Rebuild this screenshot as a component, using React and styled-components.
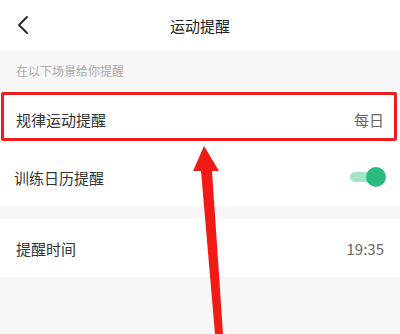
import React from 'react';
import styled, { createGlobalStyle } from 'styled-components';

const GlobalStyle = createGlobalStyle`
  body {
    margin: 0;
    background: #f7f7f7;
    font-family: 'Noto Sans CJK SC', 'Noto Sans', sans-serif;
  }
`;

const Page = styled.div`
  position: relative;
  width: 400px;
  height: 334px;
  overflow: hidden;
  background: #f7f7f7;
`;

const Header = styled.div`
  height: 50px;
  background: #fff;
  display: flex;
  align-items: center;
  justify-content: center;
  position: relative;
`;

const Back = styled.div`
  position: absolute;
  left: 16px;
  top: 15px;
  width: 16px;
  height: 20px;
  display: flex;
`;

const Title = styled.h1`
  margin: 0;
  font-size: 15px;
  font-weight: 400;
  color: #222;
`;

const SectionTip = styled.div`
  height: 40px;
  padding: 0 16px;
  display: flex;
  align-items: center;
  font-size: 12px;
  color: #aaa;
`;

const Group = styled.div`
  background: #fff;
  margin-bottom: ${p => p.$gap || 0}px;
`;

const Row = styled.div`
  height: ${p => p.$h || 58}px;
  padding: 0 16px 0 ${p => p.$left || 16}px;
  display: flex;
  align-items: center;
  justify-content: space-between;
`;

const Label = styled.span`
  font-size: 15px;
  color: #333;
`;

const Value = styled.span`
  font-size: 15px;
  color: #666;
`;

const Switch = styled.div`
  position: relative;
  width: 36px;
  height: 20px;
  margin-right: -2px;
  &::before {
    content: '';
    position: absolute;
    left: 0;
    top: 5px;
    width: 32px;
    height: 10px;
    border-radius: 5px;
    background: #a6e3c7;
  }
  &::after {
    content: '';
    position: absolute;
    right: 0;
    top: 0;
    width: 20px;
    height: 20px;
    border-radius: 50%;
    background: #2bbb7f;
  }
`;

const Highlight = styled.div`
  position: absolute;
  left: 1px;
  top: 92px;
  width: 390px;
  height: 43px;
  border: 3px solid #ec1f1c;
  border-radius: 2px;
  pointer-events: none;
`;

const Arrow = styled.svg`
  position: absolute;
  left: 0;
  top: 0;
  pointer-events: none;
`;

export default function App() {
  return (
    <Page>
      <GlobalStyle />
      <Header>
        <Back>
          <svg width="16" height="20" viewBox="0 0 16 20">
            <path d="M11 2 L3 10 L11 18" fill="none" stroke="#222" strokeWidth="1.8" strokeLinecap="round" strokeLinejoin="round" />
          </svg>
        </Back>
        <Title>运动提醒</Title>
      </Header>
      <SectionTip>在以下场景给你提醒</SectionTip>
      <Group $gap={13}>
        <Row>
          <Label>规律运动提醒</Label>
          <Value>每日</Value>
        </Row>
        <Row $left={14}>
          <Label>训练日历提醒</Label>
          <Switch />
        </Row>
      </Group>
      <Group>
        <Row>
          <Label>提醒时间</Label>
          <Value>19:35</Value>
        </Row>
      </Group>
      <Highlight />
      <Arrow width="400" height="334" viewBox="0 0 400 334">
        <path d="M204 146 L219 171 L212 171 L223 334 L215 334 L201 171 L193 171 Z" fill="#f21a17" />
      </Arrow>
    </Page>
  );
}
